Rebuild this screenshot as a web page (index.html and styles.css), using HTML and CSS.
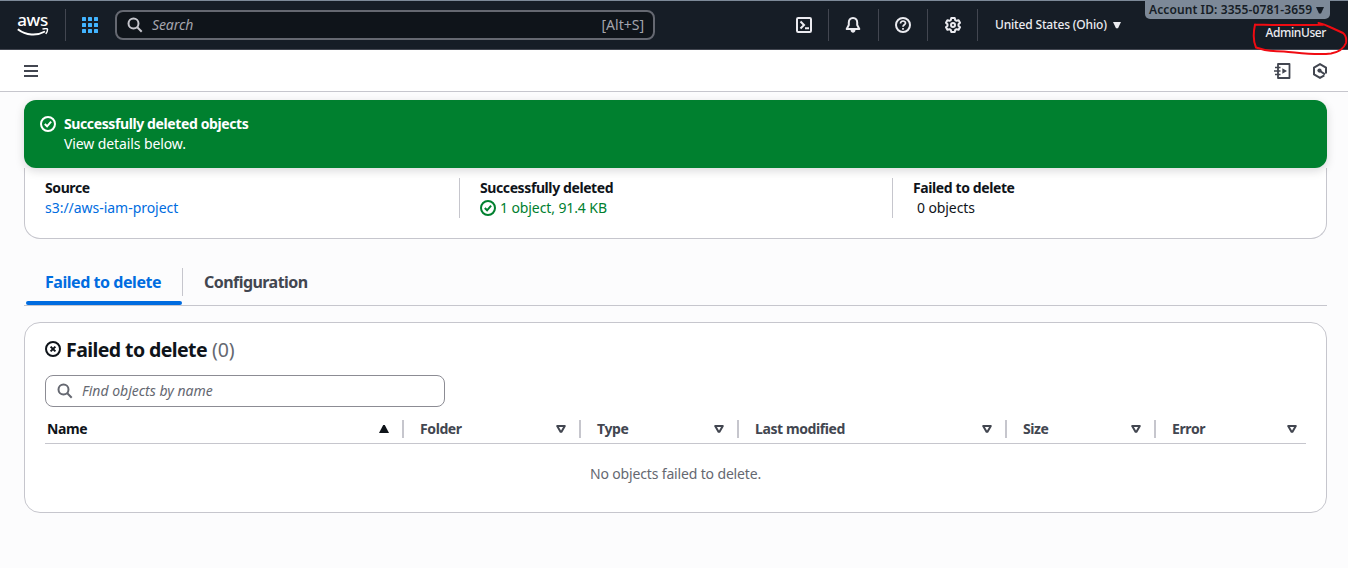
FILE: index.html
```html
<!DOCTYPE html>
<html lang="en">
<head>
<meta charset="utf-8">
<title>Delete objects: status</title>
<link rel="stylesheet" href="styles.css">
</head>
<body>
<header class="topbar">
  <div class="cell logo-cell">
    <svg class="logo-swoosh" width="32" height="8" viewBox="0 0 32 8" fill="none" stroke="#fff"><path d="M.800 1.200C9 7.600 20 8 28 3.500" stroke-width="2"/><path d="M25.500 1q4.500-1 5 .2q.3 1.600-1.700 4.800" stroke-width="1.400"/></svg>
    <span class="logo-text">aws</span>
  </div>
  <div class="cell apps-cell">
    <svg width="16" height="16" viewBox="0 0 16 16" fill="#42b4ff"><rect width="4" height="4" rx=".6"/><rect x="6" width="4" height="4" rx=".6"/><rect x="12" width="4" height="4" rx=".6"/><rect y="6" width="4" height="4" rx=".6"/><rect x="6" y="6" width="4" height="4" rx=".6"/><rect x="12" y="6" width="4" height="4" rx=".6"/><rect y="12" width="4" height="4" rx=".6"/><rect x="6" y="12" width="4" height="4" rx=".6"/><rect x="12" y="12" width="4" height="4" rx=".6"/></svg>
  </div>
  <div class="search">
    <svg width="16" height="16" viewBox="0 0 16 16" fill="none" stroke="#c6c6cd" stroke-width="2"><circle cx="6.500" cy="6.500" r="5"/><path d="M10.300 10.300l4.400 4.400"/></svg>
    <span class="search-text">Search</span>
    <span class="shortcut">[Alt+S]</span>
  </div>
  <div class="cell tool shell">
    <svg class="icon" viewBox="0 0 16 16"><rect x="1" y="1" width="14" height="14" rx="1.200"/><path d="M4.500 4.500L8 8l-3.500 3.500M9 11.200h4"/></svg>
  </div>
  <div class="cell tool">
    <svg class="icon" viewBox="0 0 16 16"><path d="M8 1C5 1 3.800 3.200 3.800 5.500V8L1.700 12h12.600L12.200 8V5.500C12.200 3.200 11 1 8 1z" stroke-linejoin="round"/><path d="M5.500 13c.3 3.600 4.700 3.600 5 0z" fill="#ebebf0" stroke="none"/></svg>
  </div>
  <div class="cell tool narrow">
    <svg class="icon" viewBox="0 0 16 16"><circle cx="8" cy="8" r="7"/><path d="M5.500 6.600C5.500 3 10.700 3.400 10.500 6.300C10.400 7.800 8 7.900 8 9.800M8 11v1.800" stroke-width="1.700"/></svg>
  </div>
  <div class="cell tool gear">
    <svg class="icon" viewBox="0 0 16 16"><path d="M6.300 1h3.400l.5 2.100 1.300.7 2.100-.6L15 5.800 13.500 7.300v1.400L15 10.200l-1.400 2.600-2.100-.6-1.300.7L9.700 15H6.300l-.5-2.100-1.300-.7-2.100.6L1 10.200l1.500-1.500V7.300L1 5.800l1.400-2.600 2.100.6 1.300-.7z" stroke-linejoin="round"/><circle cx="8" cy="8" r="2"/></svg>
  </div>
  <div class="region"><span class="region-text">United States (Ohio)</span><svg width="8" height="7" viewBox="0 0 8 7"><path d="M0 0h8L5 6.300H3z" fill="#ebebf0"/></svg></div>
  <div class="account">
    <div class="account-id"><span class="account-text">Account ID: 3355-0781-3659</span><svg width="8" height="7" viewBox="0 0 8 7"><path d="M0 0h8L5 6.500H3z" fill="#161d26"/></svg></div>
    <div class="user">AdminUser</div>
  </div>
  <svg class="marker" width="100" height="40" viewBox="1248 18 100 40"><path d="M1255 24.500Q1285 25.500 1323 24.800M1318.500 23Q1324 24 1331 27.500L1343 33Q1347 36 1346 43C1344 48 1340 52 1331 53.500C1316 55.500 1301 53 1284 51.500Q1267 51.500 1256 47.500Q1252 39 1255 24.500"/></svg>
</header>
<nav class="toolbar">
  <svg width="14" height="12" viewBox="0 0 14 12" fill="#424650"><path d="M0 0h14v2H0zM0 5h14v2H0zM0 10h14v2H0z"/></svg>
  <div class="toolbar-right">
    <svg width="17" height="16" viewBox="0 0 17 16" fill="none" stroke="#424650" stroke-width="1.800"><path d="M4 1h11.500v14H4z" stroke-linejoin="round"/><path d="M1 4.500h5.500M0 8h6.500M1 11.500h5.500" stroke-width="1.600"/><path d="M8.300 5.300l4.700 2.700-4.700 2.700z" fill="#424650" stroke="none"/></svg>
    <svg width="16" height="16" viewBox="0 0 16 16" fill="none" stroke="#424650" stroke-width="2"><path d="M14 10.500V4.600L8 1.100 2 4.600v6.800l6 3.500 4.300-2.500" stroke-linejoin="round"/><circle cx="7.500" cy="7.600" r="2.100" fill="#424650" stroke="none"/><path d="M8 8l5 3.300"/></svg>
  </div>
</nav>
<main class="content">
  <section class="flash">
    <svg width="16" height="16" viewBox="0 0 16 16" fill="none" stroke="#fff" stroke-width="2"><circle cx="8" cy="8" r="7"/><path d="M4.800 8l2.300 2.300 4-4.600"/></svg>
    <div><div class="flash-title">Successfully deleted objects</div><div class="flash-body">View details below.</div></div>
  </section>
  <section class="summary">
    <div class="stat"><div class="label">Source</div><a class="link">s3://aws-iam-project</a></div>
    <div class="stat"><div class="label">Successfully deleted</div><div class="success"><svg width="16" height="16" viewBox="0 0 16 16" fill="none" stroke="#00802f" stroke-width="2"><circle cx="8" cy="8" r="7"/><path d="M4.800 8l2.300 2.300 4-4.600"/></svg><span class="success-text">1 object, 91.4 KB</span></div></div>
    <div class="stat"><div class="label">Failed to delete</div><div class="zero">0 objects</div></div>
  </section>
  <div class="tabs">
    <div class="tab active">Failed to delete</div>
    <div class="tab config">Configuration</div>
  </div>
  <section class="panel">
    <h2 class="heading"><svg width="16" height="16" viewBox="0 0 16 16" fill="none" stroke="#0f141a" stroke-width="2"><circle cx="8" cy="8" r="7"/><path d="M5.600 5.600l4.800 4.800M10.400 5.600l-4.800 4.800"/></svg><span class="heading-text">Failed to delete</span><span class="count">(0)</span></h2>
    <div class="filter">
      <svg width="16" height="16" viewBox="0 0 16 16" fill="none" stroke="#656871" stroke-width="2"><circle cx="6.500" cy="6.500" r="5"/><path d="M10.300 10.300l4.400 4.400"/></svg>
      <span class="filter-text">Find objects by name</span>
    </div>
    <div class="columns">
      <div class="col sorted"><span>Name</span><svg width="10" height="8" viewBox="0 0 10 8"><path d="M4.200 0h1.600L10 8H0z" fill="#0f141a"/></svg></div>
      <div class="col"><span>Folder</span><svg class="sort" viewBox="0 0 10 8"><path d="M1.200 1h7.600L5.500 6.800h-1z"/></svg></div>
      <div class="col"><span>Type</span><svg class="sort" viewBox="0 0 10 8"><path d="M1.200 1h7.600L5.500 6.800h-1z"/></svg></div>
      <div class="col"><span>Last modified</span><svg class="sort" viewBox="0 0 10 8"><path d="M1.200 1h7.600L5.500 6.800h-1z"/></svg></div>
      <div class="col"><span>Size</span><svg class="sort" viewBox="0 0 10 8"><path d="M1.200 1h7.600L5.500 6.800h-1z"/></svg></div>
      <div class="col last"><span>Error</span><svg class="sort" viewBox="0 0 10 8"><path d="M1.200 1h7.600L5.500 6.800h-1z"/></svg></div>
    </div>
    <div class="empty">No objects failed to delete.</div>
  </section>
</main>
</body>
</html>
```
FILE: styles.css
```css
* { box-sizing: border-box; }
body {
  margin: 0;
  height: 568px;
  overflow: hidden;
  background: #fcfcfd;
  color: #0f141a;
  font: 14px/20px "Noto Sans", "Open Sans", sans-serif;
  white-space: nowrap;
}
svg { display: block; flex: none; }

/* Global navigation */
.topbar {
  position: relative;
  display: flex;
  align-items: center;
  height: 50px;
  background: #161d26;
  border-top: 1px solid #7d8998;
  border-bottom: 1px solid #424650;
  color: #ebebf0;
}
.cell { display: flex; height: 32px; align-items: center; justify-content: center; border-right: 1px solid #424650; }
.logo-cell { width: 66px; flex-direction: column-reverse; justify-content: flex-start; padding-bottom: 5px; }
.logo-text { color: #fff; font: 500 17px/14px "Noto Sans", sans-serif; letter-spacing: -.4px; margin-bottom: 1px; }
.apps-cell { width: 49px; border: 0; padding-right: 1px; }
.search {
  display: flex;
  align-items: center;
  width: 540px;
  height: 30px;
  padding: 0 9px 0 10px;
  border: 2px solid #656871;
  border-radius: 8px;
  background: #0f141a;
}
.search-text { margin-left: 9px; color: #a4a4ad; font-style: italic; letter-spacing: -.1px; }
.shortcut { margin-left: auto; color: #a4a4ad; }
.tool { width: 50px; }
.tool.shell { margin-left: 124px; }
.tool:not(.shell) { padding-right: 1px; }
.tool.narrow { width: 49px; padding: 0; }
.tool.gear { padding: 0 0 0 1px; }
.icon { width: 16px; height: 16px; fill: none; stroke: #ebebf0; stroke-width: 2; }
.region { display: flex; align-items: center; gap: 6px; margin-left: 17px; font-size: 12px; font-weight: 500; letter-spacing: -.17px; }
.account { margin: 0 18px 0 auto; align-self: flex-start; }
.account-id {
  display: flex;
  align-items: center;
  justify-content: space-between;
  width: 185px;
  height: 18px;
  padding: 0 6px 0 4px;
  background: #7d8998;
  border-radius: 0 0 5px 5px;
  color: #161d26;
  font-size: 12px;
  line-height: 20px;
  font-weight: 600;
  letter-spacing: .1px;
}
.account-id svg { margin-top: 1px; }
.user { margin: 4px 4px 0 0; text-align: right; font-size: 12px; font-weight: 500; letter-spacing: -.4px; }
.marker { position: absolute; right: 0; top: 17px; z-index: 2; overflow: visible; fill: none; stroke: #f00b12; stroke-width: 2; stroke-linecap: round; stroke-linejoin: round; }

/* Service toolbar */
.toolbar { display: flex; align-items: center; justify-content: space-between; height: 42px; padding: 0 20px 0 24px; background: #fff; border-bottom: 1px solid #c6c6cd; }
.toolbar-right { display: flex; gap: 21px; }

.content { padding: 8px 21px 0 24px; }
.flash {
  position: relative;
  display: flex;
  gap: 8px;
  height: 68px;
  padding: 14px 16px;
  border-radius: 12px;
  background: #00802f;
  color: #fff;
  box-shadow: 0 3px 10px rgba(0, 7, 22, .15);
}
.flash svg { margin-top: 2px; }
.flash-title { font-weight: 700; letter-spacing: -.39px; }
.flash-body { letter-spacing: -.1px; }
.summary { display: grid; grid-template-columns: 435px 433px 1fr; height: 71px; padding: 10px 20px 20px 0; background: #fff; border: 1px solid #c6c6cd; border-top: 0; border-radius: 0 0 16px 16px; }
.stat { height: 40px; padding-left: 20px; border-right: 1px solid #c6c6cd; }
.stat:last-child { border: 0; }
.label { font-weight: 700; letter-spacing: -.4px; }
.link { color: #006ce0; letter-spacing: -.03px; }
.success { display: flex; align-items: center; gap: 4px; color: #00802f; letter-spacing: -.1px; }
.zero { padding-left: 4px; letter-spacing: -.1px; }

/* Tabs */
.tabs { display: flex; height: 67px; padding: 29px 0 0 2px; border-bottom: 1px solid #c6c6cd; font-size: 16px; font-weight: 700; letter-spacing: -.45px; color: #424650; }
.tab { position: relative; padding: 4px 21px 0; }
.tab.config { letter-spacing: -.55px; }
.tab.active { width: 157px; height: 28px; padding-left: 19px; border-right: 1px solid #c6c6cd; color: #006ce0; }
.tab.active::after { content: ""; position: absolute; left: 0; top: 33px; width: 156px; height: 4px; border-radius: 2px; background: #006ce0; }

/* Results */
.panel { height: 191px; margin-top: 16px; padding: 15px 20px; background: #fff; border: 1px solid #c6c6cd; border-radius: 16px; }
.heading { display: flex; align-items: center; gap: 5px; height: 24px; margin: 0 0 13px; font-size: 19.5px; line-height: 24px; font-weight: 700; letter-spacing: -.58px; }
.heading svg { margin-top: -2px; }
.count { color: #656871; font-weight: 400; letter-spacing: -.2px; }
.filter { display: flex; align-items: center; width: 400px; height: 32px; padding-left: 11px; border: 1px solid #8c8c94; border-radius: 8px; }
.filter-text { margin-left: 9px; color: #656871; font-style: italic; }
.columns { display: grid; grid-template-columns: 359px 177px 158px 268px 149px 150px; height: 37px; padding-top: 13px; border-bottom: 1px solid #c6c6cd; font-weight: 700; letter-spacing: -.4px; color: #424650; }
.col { display: flex; align-items: center; justify-content: space-between; height: 18px; padding: 0 13px 0 16px; border-right: 2px solid #c6c6cd; }
.col.sorted { padding-left: 2px; color: #0f141a; }
.col.last { padding-right: 9px; border: 0; }
.sort { width: 10px; height: 8px; fill: none; stroke: #424650; stroke-width: 2; stroke-linejoin: round; }
.empty { padding-top: 20px; text-align: center; color: #656871; letter-spacing: -.15px; }
```
